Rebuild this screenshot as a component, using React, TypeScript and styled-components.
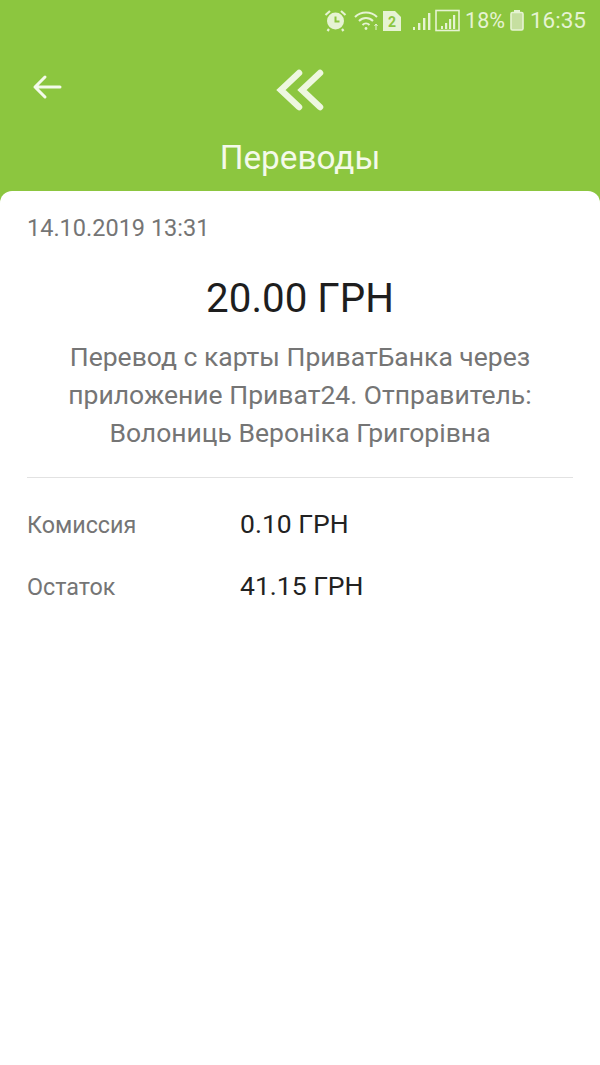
import styled, { createGlobalStyle } from "styled-components";

const GlobalStyle = createGlobalStyle`
  html, body {
    margin: 0;
    padding: 0;
    background: #8cc63f;
    font-family: Roboto, "Liberation Sans", sans-serif;
  }
`;

const Screen = styled.div`
  width: 600px;
  height: 1065px;
  display: flex;
  flex-direction: column;
  background: #8cc63f;
  overflow: hidden;
`;

const StatusBar = styled.div`
  height: 41px;
  display: flex;
  align-items: center;
  justify-content: flex-end;
  padding-right: 14px;
  color: #e6f3d3;
  font-size: 22.5px;
  box-sizing: border-box;
`;

const StatusIcons = styled.div`
  display: flex;
  align-items: center;
  margin-right: 4px;
`;

const StatusIcon = styled.svg<{ $gap?: number }>`
  display: block;
  margin-left: ${(p) => p.$gap ?? 0}px;
`;

const StatusText = styled.span<{ $gap?: number; $size?: number }>`
  margin-left: ${(p) => p.$gap ?? 0}px;
  font-size: ${(p) => p.$size ?? 22.5}px;
  line-height: 41px;
`;

const Header = styled.header`
  height: 150px;
  display: flex;
  flex-direction: column;
  position: relative;
`;

const BackButton = styled.button`
  position: absolute;
  left: 32px;
  top: 31px;
  width: 30px;
  height: 30px;
  padding: 0;
  border: 0;
  background: none;
`;

const Logo = styled.div`
  height: 96px;
  display: flex;
  justify-content: center;
  padding-top: 28px;
  box-sizing: border-box;
`;

const Title = styled.h1`
  margin: 0;
  text-align: center;
  color: #f4faea;
  font-size: 33.3px;
  font-weight: 400;
  line-height: 42px;
`;

const Card = styled.main`
  flex: 1;
  background: #fff;
  border-radius: 12px 12px 0 0;
  padding: 24px 27px 0;
`;

const DateLine = styled.div`
  color: #757575;
  font-size: 23.5px;
  line-height: 26px;
`;

const Amount = styled.div`
  margin-top: 33px;
  text-align: center;
  color: #1e1e1e;
  font-size: 40.3px;
  line-height: 50px;
`;

const Description = styled.p`
  margin: 14px 0 0;
  text-align: center;
  color: #757575;
  font-size: 26.5px;
  line-height: 38px;
`;

const Divider = styled.hr`
  margin: 25px 0 0;
  border: 0;
  border-top: 1px solid #e2e2e2;
`;

const Rows = styled.div`
  margin-top: 30px;
  display: flex;
  flex-direction: column;
  gap: 22px;
`;

const Row = styled.div`
  display: flex;
  align-items: baseline;
  height: 40px;
`;

const Label = styled.span`
  width: 213px;
  color: #757575;
  font-size: 23.3px;
`;

const Value = styled.span`
  color: #222;
  font-size: 26.5px;
`;

const App = () => {
  return (
    <Screen>
      <GlobalStyle />
      <StatusBar>
        <StatusIcons>
          <StatusIcon width="23" height="23" viewBox="0 0 23 23" fill="none">
            <circle cx="11.5" cy="12" r="8.5" fill="#e6f3d3" />
            <path d="M11.5 7.5V12.5H15.5" stroke="#8cc63f" strokeWidth="2" />
            <path d="M1.5 6L6 2M21.5 6L17 2M5 20L3.5 22M18 20L19.5 22" stroke="#e6f3d3" strokeWidth="2.2" />
          </StatusIcon>
          <StatusIcon $gap={7} width="26" height="23" viewBox="0 0 26 23" fill="none" stroke="#e6f3d3" strokeWidth="2">
            <path d="M1 8C7 2 17 2 23 8" />
            <path d="M5 12C9 8 15 8 19 12" />
            <path d="M8.5 16C10.5 14 13.5 14 15.5 16" />
            <circle cx="12" cy="19.5" r="1.4" fill="#e6f3d3" stroke="none" />
            <path d="M22 21V15M20.5 17L22 15L23.5 17" strokeWidth="1" />
          </StatusIcon>
          <StatusIcon $gap={3} width="18" height="20" viewBox="0 0 18 20">
            <path d="M0 0H12L18 6V20H0Z" fill="#e6f3d3" />
            <text x="9" y="16" textAnchor="middle" fontSize="14" fontWeight="700" fontFamily="Roboto" fill="#8cc63f">2</text>
          </StatusIcon>
          <StatusIcon $gap={12} width="48" height="24" viewBox="0 0 48 24" fill="#e6f3d3">
            <rect x="0" y="18" width="2" height="3" />
            <rect x="5" y="14" width="2.4" height="7" />
            <rect x="10" y="9" width="2.4" height="12" />
            <rect x="15" y="4" width="2.4" height="17" />
            <rect x="23" y="1.5" width="23" height="20" fill="none" stroke="#e6f3d3" strokeWidth="1.6" />
            <rect x="28" y="17" width="2" height="3" />
            <rect x="32" y="14" width="2.2" height="6" />
            <rect x="36" y="10" width="2.2" height="10" />
            <rect x="40" y="6" width="2.2" height="14" />
          </StatusIcon>
        </StatusIcons>
        <StatusText $size={21.5}>18%</StatusText>
        <StatusIcon $gap={5} width="14" height="21" viewBox="0 0 14 21">
          <rect x="4" y="0" width="6" height="3" fill="#e6f3d3" />
          <rect x="1" y="2.5" width="12" height="17.5" rx="1.5" fill="#c6dfa0" stroke="#e6f3d3" strokeWidth="1.6" />
        </StatusIcon>
        <StatusText $gap={6}>16:35</StatusText>
      </StatusBar>
      <Header>
        <BackButton aria-label="Назад">
          <svg width="30" height="30" viewBox="0 0 30 30" fill="none" stroke="#f4faea" strokeWidth="3" strokeLinecap="round" strokeLinejoin="round">
            <path d="M28 15H3M13 5L3 15L13 25" />
          </svg>
        </BackButton>
        <Logo>
          <svg width="48" height="42" viewBox="0 0 48 42" fill="none" stroke="#eef7e0" strokeWidth="6.5" strokeLinecap="round">
            <path d="M23 4L5 21L23 38" />
            <path d="M44 4L26 21L44 38" />
          </svg>
        </Logo>
        <Title>Переводы</Title>
      </Header>
      <Card>
        <DateLine>14.10.2019 13:31</DateLine>
        <Amount>20.00 ГРН</Amount>
        <Description>
          Перевод с карты ПриватБанка через
          <br />
          приложение Приват24. Отправитель:
          <br />
          Волониць Вероніка Григорівна
        </Description>
        <Divider />
        <Rows>
          <Row>
            <Label>Комиссия</Label>
            <Value>0.10 ГРН</Value>
          </Row>
          <Row>
            <Label>Остаток</Label>
            <Value>41.15 ГРН</Value>
          </Row>
        </Rows>
      </Card>
    </Screen>
  );
};

export default App;
